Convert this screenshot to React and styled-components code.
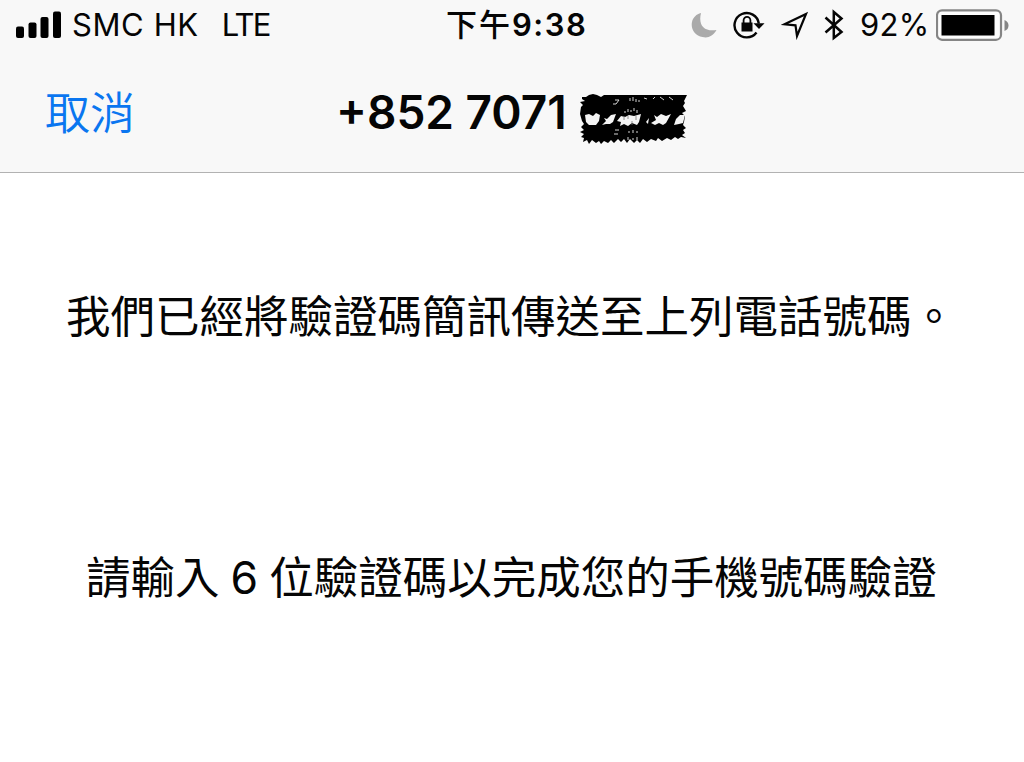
import React from 'react';
import styled, { createGlobalStyle } from 'styled-components';

const GlobalStyle = createGlobalStyle`
  * { box-sizing: border-box; }
  body {
    margin: 0;
    background: #fff;
    color: #050505;
    font-family: Inter, "Noto Sans CJK TC", sans-serif;
  }
`;

const Screen = styled.div`
  width: 1024px;
  height: 762px;
  overflow: hidden;
  background: #fff;
`;

const Header = styled.header`
  height: 173px;
  background: #f8f8f8;
  border-bottom: 1px solid #b2b2b2;
`;

const StatusBar = styled.div`
  display: grid;
  grid-template-columns: 446px 1fr 335px;
  height: 50px;
  align-items: center;
  white-space: nowrap;
`;

const StatusGroup = styled.div`
  display: flex;
  align-items: center;
  height: 50px;
  padding-left: ${(p) => p.$inset || 0}px;
`;

const StatusText = styled.span`
  font-size: 31px;
  line-height: 50px;
  font-weight: ${(p) => p.$weight || 400};
  letter-spacing: ${(p) => p.$track || 0}px;
  margin-left: ${(p) => p.$gap || 0}px;
`;

const Glyph = styled.svg`
  display: block;
  flex: none;
  margin-left: ${(p) => p.$gap || 0}px;
  margin-top: ${(p) => p.$drop || 0}px;
`;

const NavBar = styled.nav`
  display: flex;
  align-items: center;
  height: 122px;
  padding: 0 0 0 45px;
  white-space: nowrap;
`;

const CancelButton = styled.button`
  width: 291px;
  height: 122px;
  padding: 0;
  border: 0;
  background: none;
  color: #0a76f0;
  text-align: left;
  font: 350 45px/122px "Noto Sans CJK TC", sans-serif;
`;

const PhoneNumber = styled.h1`
  display: flex;
  align-items: center;
  margin: 0;
  padding-top: 2px;
  font-size: 46px;
  font-weight: 590;
  line-height: 120px;
  letter-spacing: 0;
`;

const Body = styled.main`
  display: flex;
  flex-direction: column;
`;

const Message = styled.p`
  margin: ${(p) => p.$top}px 0 0 ${(p) => p.$left}px;
  height: 64px;
  font-size: 44.5px;
  line-height: 64px;
  font-weight: 370;
  word-spacing: ${(p) => p.$wordGap || 0}px;
  white-space: nowrap;
`;

const Signal = () => (
  <Glyph width="46" height="28" viewBox="0 0 46 28">
    <rect x="0" y="15.5" width="8" height="11.5" rx="2" />
    <rect x="12.5" y="11.5" width="8" height="15.5" rx="2" />
    <rect x="24.5" y="6" width="8" height="21" rx="2" />
    <rect x="37" y="0.5" width="8" height="26.5" rx="2" />
  </Glyph>
);

const Moon = () => (
  <Glyph width="27" height="28" viewBox="0 0 27 28">
    <path d="M10 2C7 14 13 21 25.500 19C22 25 17 27.500 11.500 26C4 24.500 -.5 18 1 11C2 6.500 5.500 3 10 2Z" fill="#aaa" />
  </Glyph>
);

const RotationLock = () => (
  <Glyph width="34" height="30" viewBox="0 0 34 30" $gap={15} fill="none" stroke="#050505">
    <path d="M25.800 13.500A12.200 12.200 0 1 0 23.500 22.500" strokeWidth="2.400" />
    <path d="M20.500 13.300H31.500L26 19Z" fill="#050505" stroke="none" />
    <rect x="8.500" y="12.500" width="11" height="9" fill="#050505" stroke="none" />
    <path d="M10.600 14V10.300a3.400 3.400 0 0 1 6.800 0V14" strokeWidth="1.800" />
  </Glyph>
);

const LocationArrow = () => (
  <Glyph width="28" height="29" viewBox="0 0 28 29" $gap={14}>
    <path d="M3.500 13.300L25 3L16 25L14.500 14.300Z" fill="none" stroke="#050505" strokeWidth="2.200" />
  </Glyph>
);

const Bluetooth = () => (
  <Glyph width="21" height="32" viewBox="0 0 21 32" $gap={15}>
    <path d="M1.500 8.500L17.500 23L9.800 29V3L17.500 9.500L1.500 23.500" fill="none" stroke="#050505" strokeWidth="2.500" />
  </Glyph>
);

const Battery = () => (
  <Glyph width="74" height="32" viewBox="0 0 74 32" $gap={7}>
    <rect x="1" y="1.300" width="64" height="29.500" rx="5" fill="#fdfdfd" stroke="#858585" strokeWidth="2.200" />
    <rect x="5.500" y="6" width="53" height="20.500" fill="#000" />
    <path d="M68.500 11V22Q72.500 20.500 72.500 16.500T68.500 11Z" fill="#858585" />
  </Glyph>
);

const Scribble = () => (
  <Glyph width="110" height="56" viewBox="0 0 110 56" $gap={12} $drop={17}>
    <path
      d="M3 6L3 4L7 4L10 2L14 1L18 2L22 4L25 2L108 2L105 8L106 10L104 13L107 18L103 20L106 23L105 29L104 32L107 35L104 37L106 40L103 42L107 45L102 44L99 46L96 44L92 47L88 45L83 48L79 45L77 48L72 46L68 49L64 46L61 50L58 47L55 50L51 46L48 50L45 46L42 49L39 46L35 50L32 47L29 50L25 48L22 51L20 48L17 50L13 47L10 51L8 47L4 49L5 45L2 44L5 41L1 39L5 37L2 34L5 31L3 28L1 21L2 14L4 12L1 9L6 8Z"
      fill="#000"
    />
    <g fill="#f4f4f4">
      <path d="M6 22L10 21L14 23L17 20L21 22L20 28L17 32L10 32L7 29Z" />
      <path d="M25 25L28 26L32 22L37 21L34 29L31 31L27 31L23 32L27 28Z" />
      <path d="M42 23L46 24L50 22L55 23L62 21L60 29L58 32L53 30L49 33L45 31L41 33L42 29L38 28Z" />
      <path d="M67 29L70 25L69 31ZM75 22L78 24L82 21L87 23L92 21L87 30L84 32L80 30L76 32L72 30L77 27Z" />
      <path d="M97 26L101 22L106 22L104 30L100 31L95 32Z" />
    </g>
    <path
      d="M36 7h4l-3 4h-3M51 5v3m3-4v4m3-2v3m3-2v2m5-4l3 1M74 6l2-2M81 4l4 3M90 4l4 3M36 37h4m-5 4h4M46 18v2m3-4v3m3-2v2m3-4v3m3-1v3M50 38v2m4-3v3m4-2v2m-9 7v-3m5 3v-2m4 2v-3"
      fill="none"
      stroke="#d4d4d4"
      strokeWidth="1"
    />
    <path d="M45 23v4m4-4v3m4 2v4m4-9v4" fill="none" stroke="#777" strokeWidth="0.8" />
  </Glyph>
);

export default function App() {
  return (
    <Screen>
      <GlobalStyle />
      <Header>
        <StatusBar>
          <StatusGroup $inset={16}>
            <Signal />
            <StatusText $gap={10} $track={0.6}>SMC HK</StatusText>
            <StatusText $gap={23} $track={-1.8}>LTE</StatusText>
          </StatusGroup>
          <StatusGroup>
            <StatusText $weight={500} $track={2}>下午</StatusText>
            <StatusText $weight={600} $track={1.5}>9:38</StatusText>
          </StatusGroup>
          <StatusGroup $inset={2}>
            <Moon />
            <RotationLock />
            <LocationArrow />
            <Bluetooth />
            <StatusText $gap={15} $track={0.3}>92%</StatusText>
            <Battery />
          </StatusGroup>
        </StatusBar>
        <NavBar>
          <CancelButton>取消</CancelButton>
          <PhoneNumber>
            +852 7071
            <Scribble />
          </PhoneNumber>
        </NavBar>
      </Header>
      <Body>
        <Message $top={112} $left={66}>我們已經將驗證碼簡訊傳送至上列電話號碼。</Message>
        <Message $top={197} $left={86} $wordGap={-1.5}>請輸入 6 位驗證碼以完成您的手機號碼驗證</Message>
      </Body>
    </Screen>
  );
}
